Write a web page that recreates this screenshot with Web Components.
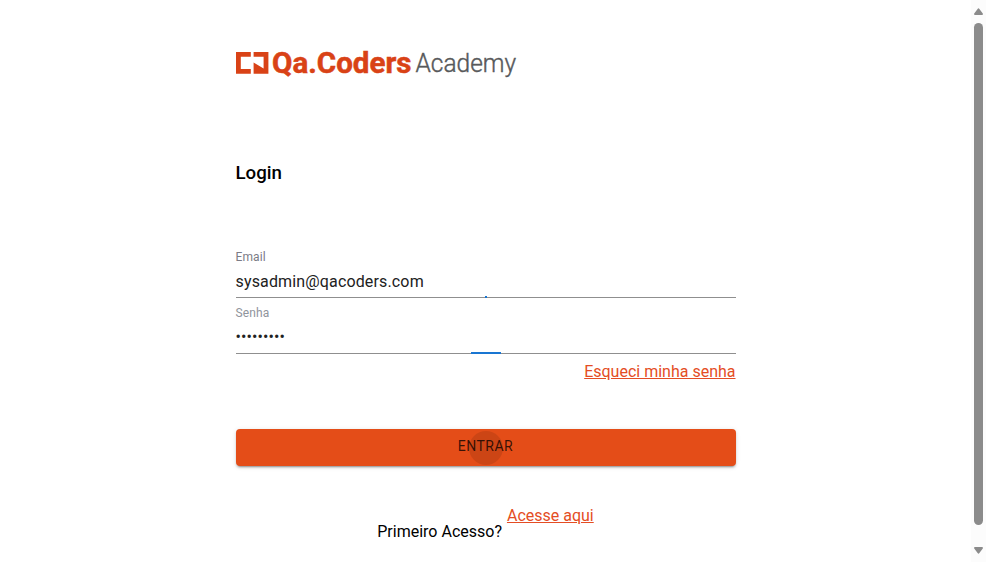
<!DOCTYPE html>
<html lang="pt-BR">
<head>
<meta charset="utf-8">
<title>Qa.Coders Academy</title>
<style>
html,body{margin:0;height:100%;overflow:hidden;background:#fff}
body{font-family:Roboto,"Liberation Sans",sans-serif;font-size:16px;color:#000}
</style>
</head>
<body>
<login-page></login-page>
<script>
const define = (name, html) => customElements.define(name, class extends HTMLElement {
  constructor() {
    super();
    const t = document.createElement('template');
    t.innerHTML = html;
    this.attachShadow({mode: 'open'}).append(t.content.cloneNode(true));
  }
});

define('brand-logo', `
<style>:host{display:block;height:34px}svg{display:block;overflow:visible}</style>
<svg width="284" height="34" viewBox="0 0 284 34" role="img" aria-label="Qa.Coders Academy">
  <g fill="#d94216">
    <path d="M0 4H14.8V8.8H4.8V21H14.8V25.7H0Z"/>
    <path d="M17.6 4H32.4V25.7H17.6V14.6L27.6 20.4V8.8H17.6Z"/>
    <text x="36" y="25.2" font-size="28.6" font-weight="700" textLength="139.5" lengthAdjust="spacingAndGlyphs" stroke="#d94216" stroke-width=".5">Qa.Coders</text>
  </g>
  <text x="179.6" y="24" font-size="25.2" font-weight="300" fill="#58595b" stroke="#58595b" stroke-width=".4" textLength="100.5" lengthAdjust="spacingAndGlyphs">Academy</text>
</svg>`);

define('text-field', `
<style>
:host{display:block;position:relative;height:48px;border-bottom:1px solid #8f8f8f;box-sizing:border-box;color:#212121}
.label{display:block;font-size:12px;line-height:14px;color:var(--label,#7b7b86);letter-spacing:.14px}
.value{display:block;margin-top:var(--gap,8px);font-size:16px;line-height:20px;letter-spacing:var(--track,.15px)}
.focus{position:absolute;left:50%;bottom:-1px;height:2px;width:var(--focus,2px);transform:translateX(-50%);background:#1976d2}
</style>
<span class="label"><slot name="label"></slot></span>
<span class="value"><slot></slot></span><i class="focus"></i>`);

define('text-link', `
<style>:host{display:inline-block}a{color:#e44d24;text-decoration:underline;line-height:20px}</style>
<a><slot></slot></a>`);

define('submit-button', `
<style>
:host{display:block}
button{display:block;position:relative;width:100%;height:37px;padding:0 0 3px;border:0;border-radius:4px;background:#e44d18;color:rgba(0,0,0,.76);font:400 14px/24px Roboto,sans-serif;letter-spacing:.5px;box-shadow:0 3px 1px -2px rgba(0,0,0,.2),0 2px 2px rgba(0,0,0,.14),0 1px 5px rgba(0,0,0,.12)}
i{position:absolute;left:233px;top:2px;width:34px;height:34px;border-radius:50%;background:rgba(0,0,0,.1)}
</style>
<button><slot></slot><i></i></button>`);

define('scroll-bar', `
<style>
:host{display:flex;flex-direction:column;align-items:center;width:15px;height:562px;box-sizing:border-box;padding:8px 0;background:#fcfcfc}
svg{display:block;fill:#8b8b8b;flex:none}
.thumb{width:9px;height:502px;border-radius:5px;background:#8b8b8b;margin:8px 0 22px}
</style>
<svg width="9" height="7"><path d="M4.5 0.3Q5 .3 5.4 1L8.8 5.6Q9.3 7 8 7H1Q-.3 7 .2 5.6L3.6 1Q4 .3 4.5 .3Z"/></svg>
<div class="thumb"></div>
<svg width="9" height="7"><path d="M4.5 6.7Q5 6.7 5.4 6L8.8 1.4Q9.3 0 8 0H1Q-.3 0 .2 1.4L3.6 6Q4 6.7 4.5 6.7Z"/></svg>`);

define('login-page', `
<style>
:host{display:flex;height:562px;width:986px}
main{flex:1;display:flex;flex-direction:column;align-items:center;padding-top:48px}
.col{width:500px}
h1{font-size:18.7px;line-height:24px;font-weight:500;margin:79px 0 65px}
.fields{display:grid;gap:8px}
.fields text-field:last-child{--focus:30px;--label:#8f949c;--gap:7px;--track:.1px}
.forgot{display:flex;justify-content:flex-end;margin-top:8px}
submit-button{margin-top:47px}
.first{display:flex;justify-content:center;gap:5px;margin-top:40px;line-height:20px}
.first span{padding-top:16px}
</style>
<main><div class="col">
<brand-logo></brand-logo>
<h1>Login</h1>
<div class="fields">
<text-field><span slot="label">Email</span>sysadmin@qacoders.com</text-field>
<text-field><span slot="label">Senha</span>•••••••••</text-field>
</div>
<div class="forgot"><text-link>Esqueci minha senha</text-link></div>
<submit-button>ENTRAR</submit-button>
<div class="first"><span>Primeiro Acesso?</span><text-link>Acesse aqui</text-link></div>
</div></main>
<scroll-bar></scroll-bar>`);
</script>
</body>
</html>
